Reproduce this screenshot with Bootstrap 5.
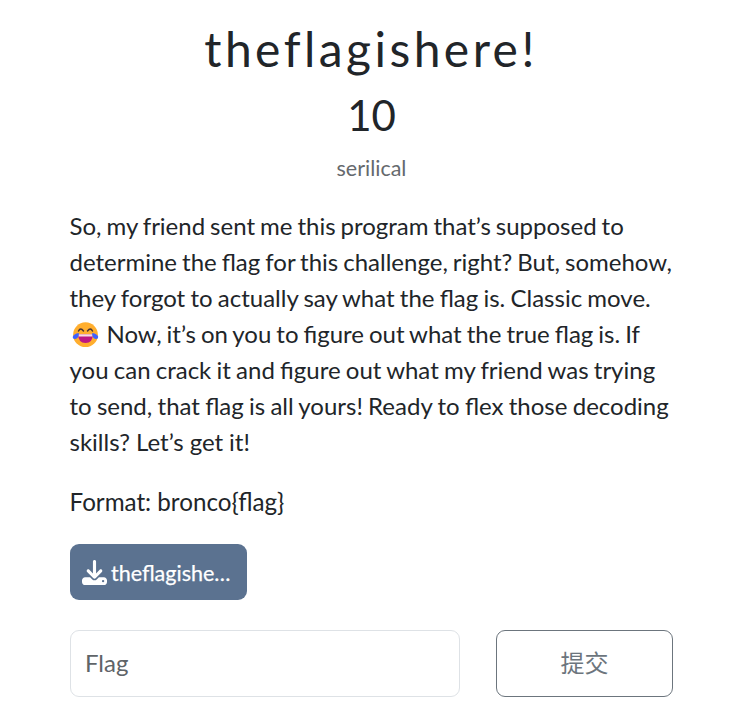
<!DOCTYPE html>
<html lang="zh-CN"><head><meta charset="utf-8"><meta name="viewport" content="width=device-width, initial-scale=1">
<title>theflagishere!</title>
<link rel="stylesheet" href="https://cdn.jsdelivr.net/npm/bootstrap@5.3.0/dist/css/bootstrap.min.css">
<style>
body{font-family:Lato,"Noto Sans CJK SC",sans-serif;font-size:24px;line-height:36px;color:#212529}
.challenge{width:603px;margin-left:70px;padding-top:20px}
.title{font-size:48px;line-height:58px;letter-spacing:3.45px;font-weight:400;margin-left:-1px}
.points{font-size:42px;line-height:50px;font-weight:400;margin-top:12px}
.author{font-size:21.5px;line-height:31px;color:#65696d;margin-top:13px}
.desc{margin-top:24px;margin-left:-.5px}
.desc p{margin-bottom:24px;white-space:nowrap;word-spacing:-1.15px}
.desc .format{font-size:24.2px;word-spacing:0}
.ws-a{word-spacing:-.93px}
.ws-b{word-spacing:-.88px}
.ws-c{word-spacing:-.15px}
.emoji{width:32px;height:26px;vertical-align:-5px;margin-left:-.5px;margin-right:.5px}
.file-btn{width:177px;height:56px;background:#5b7290!important;border-radius:9px;font-size:21px;padding:0 12px}
.file-btn svg{width:25px;height:25px;margin-right:4px}
.file-label{font-size:21.5px;-webkit-text-stroke:.25px #fff;padding-top:3px}
.flag-input{width:390px;height:67px;font-size:24px;border-radius:9px;padding:0 14px 2px}
.flag-input::placeholder{color:#5f6468}
.send{width:177px;height:67px;font-size:24px;border-radius:9px;padding:0 0 1px}
.submit-row{margin-top:30px}
</style></head><body>
<main class="challenge">
<h2 class="title text-center mb-0">theflagishere!</h2>
<h3 class="points text-center mb-0">10</h3>
<div class="author text-center">serilical</div>
<div class="desc"><p>So, my friend sent me this program that’s supposed to<br>determine the flag for this challenge, right? But, somehow,<br><span class="ws-a">they forgot to actually say what the flag is. Classic move.</span><br><svg class="emoji" viewBox="0 0 32 26" role="img" aria-label="face with tears of joy"><circle cx="16.500" cy="12.700" r="12.400" fill="#ffae2e"/><path d="M9.500 9q2-4 5 0M18.500 9q3-4 5 0" fill="none" stroke="#493536" stroke-width="1.500" stroke-linecap="round"/><path d="M9.200 12.200h14.600q0 8.800-7.300 8.800t-7.300-8.800z" fill="#bd1683"/><path d="M9.200 12.200h14.600l-.4 2.300H9.600z" fill="#f6dce0"/><path d="M9.800 11q.4 5-3.300 6-3 .3-2.700-2.200Q4.500 12 9.800 11zM23.200 11q-.4 5 3.300 6 3 .3 2.700-2.200Q28.500 12 23.200 11z" fill="#3f61ff"/></svg> Now, it’s on you to figure out what the true flag is. If<br><span class="ws-a">you can crack it and figure out what my friend was trying</span><br><span class="ws-b">to send, that flag is all yours! Ready to flex those decoding</span><br><span class="ws-c">skills? Let’s get it!</span></p><p class="format">Format: bronco{flag}</p></div>
<a class="file-btn btn text-white d-flex align-items-center border-0" href="#"><svg viewBox="0 0 512 512" fill="currentColor" aria-hidden="true"><path d="M288 32c0-17.700-14.300-32-32-32s-32 14.300-32 32v242.700l-73.400-73.400c-12.500-12.500-32.800-12.500-45.300 0s-12.500 32.800 0 45.300l128 128c12.500 12.500 32.800 12.500 45.300 0l128-128c12.500-12.500 12.500-32.800 0-45.300s-32.800-12.500-45.300 0L288 274.700V32zM64 352c-35.300 0-64 28.700-64 64v32c0 35.300 28.700 64 64 64h384c35.300 0 64-28.700 64-64v-32c0-35.300-28.700-64-64-64H346.500l-45.300 45.300c-25 25-65.500 25-90.500 0L165.500 352H64zm368 56a24 24 0 1 1 0 48 24 24 0 1 1 0-48z"/></svg><span class="file-label">theflagishe…</span></a>
<form class="d-flex justify-content-between submit-row"><input class="form-control flag-input" placeholder="Flag"><button type="button" class="btn btn-outline-secondary send">提交</button></form>
</main>
<script src="https://cdn.jsdelivr.net/npm/bootstrap@5.3.0/dist/js/bootstrap.bundle.min.js"></script>
</body></html>
